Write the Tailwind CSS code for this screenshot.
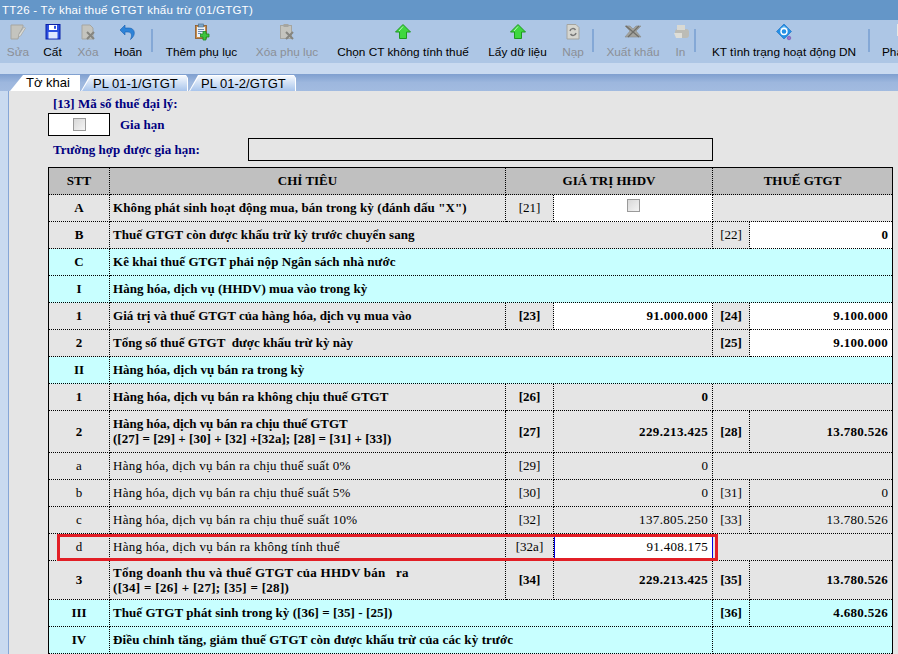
<!doctype html>
<html><head><meta charset="utf-8">
<script src="https://cdn.jsdelivr.net/npm/@tailwindcss/browser@4"></script>
</head>
<body class="relative w-[898px] h-[654px] overflow-hidden bg-[#c9daf0]">
<div class="h-[20px] bg-[#6496c8] text-white text-[11.5px] leading-[21px] pl-[2px] font-['Liberation_Sans',sans-serif] tracking-[0.02em]">TT26 - Tờ khai thuế GTGT khấu trừ (01/GTGT)</div>
<div class="h-[43px] bg-[#adc6e5] flex whitespace-nowrap overflow-hidden font-['Liberation_Sans',sans-serif] text-[11.8px] leading-[14px] text-black [&>*]:shrink-0">
  <div class="w-[36px] flex flex-col items-center text-[#8b8f96]"><svg class="w-[18px] h-[18px] mt-[3px]" viewBox="0 0 18 18"><path d="M2 2h12v2l-4 7-1 5H2z" fill="#c4c4be" stroke="#a5a5a0"/><path d="M15 4l1.500 1-5 8-2 1 .3-2.500z" fill="#dcdcd6" stroke="#a5a5a0" stroke-width=".7"/></svg><span class="mt-[4px]">Sửa</span></div>
  <div class="w-[33px] flex flex-col items-center"><svg class="w-[18px] h-[18px] mt-[3px]" viewBox="0 0 18 18"><rect x="2" y="1.500" width="14" height="14.500" fill="#2b4fe0" stroke="#0a20a8"/><rect x="5" y="2" width="8" height="5" fill="#fff"/><rect x="10" y="2.800" width="2" height="3" fill="#2b4fe0"/><rect x="4.500" y="9" width="9" height="6.500" fill="#dfe8ff"/></svg><span class="mt-[4px]">Cất</span></div>
  <div class="w-[38px] flex flex-col items-center text-[#8b8f96]"><svg class="w-[18px] h-[18px] mt-[3px]" viewBox="0 0 18 18"><path d="M3 2h8l3 3v11H3z" fill="#c4c4be" stroke="#a5a5a0"/><path d="M8 9l7 7M15 9l-7 7" stroke="#85857f" stroke-width="2"/></svg><span class="mt-[4px]">Xóa</span></div>
  <div class="w-[42px] flex flex-col items-center"><svg class="w-[18px] h-[18px] mt-[3px]" viewBox="0 0 18 18"><path d="M6 5h4c6 0 7.500 7 1.500 11.500 2-4.500 1-7.500-2.500-7.500H6v3L1 7 6 2z" fill="#2d83d8" stroke="#1a5fb0" stroke-width=".6"/></svg><span class="mt-[4px]">Hoãn</span></div>
  <div class="w-[2px] h-[23px] mt-[9px] ml-[2px] mr-[5px] bg-[#84a8d6]"></div>
  <div class="w-[87px] flex flex-col items-center"><svg class="w-[18px] h-[18px] mt-[3px]" viewBox="0 0 18 18"><rect x="2.500" y="2.500" width="11" height="13" fill="#c98c4a" stroke="#8a5a2a" stroke-width=".8"/><rect x="4" y="4" width="8" height="10" fill="#eaf2fa"/><rect x="5.500" y="1" width="5" height="3" fill="#7fa7c9" stroke="#446a8a" stroke-width=".6"/><path d="M5 6.500h6M5 8.500h5M5 10.500h3" stroke="#6d8ab0"/><path d="M10 8.500h3v2.500h3v3h-3V17h-3v-3H7.500v-3H10z" fill="#3fc43f" stroke="#1d8a1d" stroke-width=".8"/></svg><span class="mt-[4px]">Thêm phụ lục</span></div>
  <div class="w-[84px] flex flex-col items-center text-[#8b8f96]"><svg class="w-[18px] h-[18px] mt-[3px]" viewBox="0 0 18 18"><rect x="2.500" y="2.500" width="11" height="13" fill="#c4c4be" stroke="#a5a5a0"/><rect x="5.500" y="1" width="5" height="3" fill="#a5a5a0"/><path d="M8 9l7 7M15 9l-7 7" stroke="#85857f" stroke-width="2"/></svg><span class="mt-[4px]">Xóa phụ lục</span></div>
  <div class="w-[148px] flex flex-col items-center"><svg class="w-[18px] h-[18px] mt-[3px]" viewBox="0 0 18 18"><path d="M9 1.500L16.500 9H12.500v6.500h-7V9H1.500z" fill="#3fd83f" stroke="#1f9a1f"/><path d="M9 3.500L5 8" stroke="#b5f5b5"/></svg><span class="mt-[4px]">Chọn CT không tính thuế</span></div>
  <div class="w-[81px] flex flex-col items-center"><svg class="w-[18px] h-[18px] mt-[3px]" viewBox="0 0 18 18"><path d="M9 1.500L16.500 9H12.500v6.500h-7V9H1.500z" fill="#3fd83f" stroke="#1f9a1f"/><path d="M9 3.500L5 8" stroke="#b5f5b5"/></svg><span class="mt-[4px]">Lấy dữ liệu</span></div>
  <div class="w-[30px] flex flex-col items-center text-[#8b8f96]"><svg class="w-[18px] h-[18px] mt-[3px]" viewBox="0 0 18 18"><path d="M3 1.500h9l3 3V16H3z" fill="#d6d6d0" stroke="#a5a5a0"/><path d="M6 8a3 3 0 0 1 5.500-1M12 10a3 3 0 0 1-5.500 1" fill="none" stroke="#777" stroke-width="1.500"/></svg><span class="mt-[4px]">Nạp</span></div>
  <div class="w-[2px] h-[23px] mt-[9px] ml-[4px] mr-[4px] bg-[#84a8d6]"></div>
  <div class="w-[70px] flex flex-col items-center text-[#8b8f96]"><svg class="w-[18px] h-[18px] mt-[3px]" viewBox="0 0 18 18"><path d="M1 3h5l3 3 3-3h5l-5 5 5 6H1l5-6z" fill="#a3a39e" stroke="#8c8c86" stroke-width=".6"/><path d="M2 3l13 11M15 3L4 14" stroke="#6f6f6a" stroke-width="1.300"/></svg><span class="mt-[4px]">Xuất khẩu</span></div>
  <div class="w-[25px] flex flex-col items-center text-[#8b8f96]"><svg class="w-[18px] h-[18px] mt-[3px]" viewBox="0 0 18 18"><path d="M3 9a3 3 0 0 1 3-3h8a3 3 0 0 1 3 3v3a3 3 0 0 1-3 3H7a4 4 0 0 1-4-4z" fill="#bcbcb6"/><path d="M5 2h8v5H5z" fill="#d9d9d3"/><path d="M2 10h8v5H4z" fill="#deded8"/></svg><span class="mt-[4px]">In</span></div>
  <div class="w-[2px] h-[23px] mt-[9px] ml-[1px] mr-[5px] bg-[#84a8d6]"></div>
  <div class="w-[166px] flex flex-col items-center"><svg class="w-[18px] h-[18px] mt-[3px]" viewBox="0 0 18 18"><path d="M9 1l7.500 7.500L9 16 1.500 8.500z" fill="#2590e6" stroke="#1a6cc0" stroke-width=".6"/><path d="M9 3l4 3H5z" fill="#8fd0f8"/><circle cx="9" cy="8.500" r="3" fill="none" stroke="#fff" stroke-width="1.400"/><circle cx="14" cy="15" r="1.800" fill="#9a70d0" stroke="#6a45a0" stroke-width=".5"/></svg><span class="mt-[4px]">KT tình trạng hoạt động DN</span></div>
  <div class="w-[2px] h-[23px] mt-[9px] ml-[1px] mr-[4px] bg-[#84a8d6]"></div>
  <div class="flex flex-col items-start pl-[8px]"><div class="h-[25px] pt-[4px] pl-[15px]"><div class="w-[4px] h-[12px] bg-[#e8e8e4]"></div></div><span>Phát hành</span></div>
</div>
<div class="h-[11px]"></div>
<div class="h-[17px] pl-[8px] bg-linear-to-b from-[#7f9fcf] via-[#9db7de] to-[#a2bbe0] flex items-end font-['Liberation_Sans',sans-serif] text-[13px] leading-[16px] text-black whitespace-nowrap">
  <div class="w-[70px] h-[16px] ml-[2px] pl-[16px] bg-white [clip-path:polygon(13px_0,100%_0,100%_100%,0_100%)]">Tờ khai</div>
  <div class="w-[107px] h-[16px] ml-[1px] p-px pb-0 bg-white [clip-path:polygon(9px_0,calc(100%-2px)_0,100%_3px,100%_100%,0_100%)]"><div class="h-full pl-[11px] bg-linear-to-b from-[#f4f8fd] to-[#a9c5ec] [clip-path:polygon(9px_0,100%_0,100%_100%,0_100%)] leading-[15px]">PL 01-1/GTGT</div></div>
  <div class="w-[107px] h-[16px] ml-[1px] p-px pb-0 bg-white [clip-path:polygon(9px_0,calc(100%-2px)_0,100%_3px,100%_100%,0_100%)]"><div class="h-full pl-[11px] bg-linear-to-b from-[#f4f8fd] to-[#a9c5ec] [clip-path:polygon(9px_0,100%_0,100%_100%,0_100%)] leading-[15px]">PL 01-2/GTGT</div></div>
</div>
<div class="ml-[8px] h-[563px] border-l border-[#86a6d6] bg-[#e5e5e5] overflow-hidden font-['Liberation_Serif',serif] text-[13px] leading-[15px] text-black">
  <div class="pl-[44px] pt-[5px] h-[22px] font-bold text-[#000080]">[13] Mã số thuế đại lý:</div>
  <div class="flex items-center h-[23px] ml-[39px]">
    <div class="w-[62px] h-[23px] border border-black bg-white flex items-center justify-center"><div class="w-[13px] h-[13px] border border-[#9a9a9a] bg-linear-to-br from-[#d8d8d8] to-[#f4f4f4]"></div></div>
    <div class="ml-[10px] font-bold text-[#000080]">Gia hạn</div>
  </div>
  <div class="flex items-center h-[23px] mt-[2px] ml-[44px]">
    <div class="w-[195px] font-bold text-[#000080]">Trường hợp được gia hạn:</div>
    <div class="w-[465px] h-[23px] border border-black"></div>
  </div>
  <table class="mt-[6px] ml-[39px] w-[845px] table-fixed border-separate border-spacing-0 border-t border-x border-black [&_td]:border-b [&_td]:pb-px [&_td]:border-dotted [&_td]:border-black [&_td]:align-middle [&_td:not(:last-child)]:border-r [&_tr]:h-[27px]">
    <colgroup><col class="w-[61px]"><col class="w-[396px]"><col class="w-[48px]"><col class="w-[159px]"><col class="w-[37px]"><col class="w-[142px]"></colgroup>
    <tbody>
      <tr class="bg-[#c0c0c0] font-bold text-center"><td>STT</td><td>CHỈ TIÊU</td><td colspan="2">GIÁ TRỊ HHDV</td><td colspan="2">THUẾ GTGT</td></tr>
      <tr class="font-bold"><td class="text-center">A</td><td class="pl-[3px] tracking-[.1px]">Không phát sinh hoạt động mua, bán trong kỳ (đánh dấu "X")</td><td class="text-center font-normal">[21]</td><td class="bg-white !align-top"><div class="w-[13px] h-[13px] mx-auto mt-[4px] border border-[#9a9a9a] bg-linear-to-br from-[#d8d8d8] to-[#f4f4f4]"></div></td><td colspan="2"></td></tr>
      <tr class="font-bold"><td class="text-center">B</td><td colspan="3" class="pl-[3px] tracking-[.06px]">Thuế GTGT còn được khấu trừ kỳ trước chuyển sang</td><td class="text-center font-normal">[22]</td><td class="bg-white text-right pr-[4px]">0</td></tr>
      <tr class="font-bold bg-[#c8ffff]"><td class="text-center">C</td><td colspan="5" class="pl-[3px] tracking-[.05px]">Kê khai thuế GTGT phải nộp Ngân sách nhà nước</td></tr>
      <tr class="font-bold bg-[#c8ffff]"><td class="text-center">I</td><td colspan="5" class="pl-[3px] tracking-[.03px]">Hàng hóa, dịch vụ (HHDV) mua vào trong kỳ</td></tr>
      <tr class="font-bold"><td class="text-center">1</td><td class="pl-[3px] tracking-[.04px]">Giá trị và thuế GTGT của hàng hóa, dịch vụ mua vào</td><td class="text-center">[23]</td><td class="bg-white text-right pr-[4px] tracking-[.3px]">91.000.000</td><td class="text-center">[24]</td><td class="bg-white text-right pr-[4px] tracking-[.3px]">9.100.000</td></tr>
      <tr class="font-bold"><td class="text-center">2</td><td colspan="3" class="pl-[3px]">Tổng số thuế GTGT&nbsp; được khấu trừ kỳ này</td><td class="text-center">[25]</td><td class="bg-white text-right pr-[4px] tracking-[.3px]">9.100.000</td></tr>
      <tr class="font-bold bg-[#c8ffff]"><td class="text-center">II</td><td colspan="5" class="pl-[3px]">Hàng hóa, dịch vụ bán ra trong kỳ</td></tr>
      <tr class="font-bold"><td class="text-center">1</td><td class="pl-[3px] tracking-[.02px]">Hàng hóa, dịch vụ bán ra không chịu thuế GTGT</td><td class="text-center">[26]</td><td class="text-right pr-[4px]">0</td><td colspan="2"></td></tr>
      <tr class="font-bold !h-[42px]"><td class="text-center">2</td><td class="pl-[3px]"><span class="tracking-[-.05px]">Hàng hóa, dịch vụ bán ra chịu thuế GTGT</span><br><span class="tracking-[.04px]">([27] = [29] + [30] + [32] +[32a]; [28] = [31] + [33])</span></td><td class="text-center">[27]</td><td class="text-right pr-[4px] tracking-[.36px]">229.213.425</td><td class="text-center">[28]</td><td class="text-right pr-[4px] tracking-[.3px]">13.780.526</td></tr>
      <tr><td class="text-center">a</td><td class="pl-[3px] tracking-[.26px]">Hàng hóa, dịch vụ bán ra chịu thuế suất 0%</td><td class="text-center">[29]</td><td class="text-right pr-[4px]">0</td><td colspan="2"></td></tr>
      <tr><td class="text-center">b</td><td class="pl-[3px] tracking-[.26px]">Hàng hóa, dịch vụ bán ra chịu thuế suất 5%</td><td class="text-center">[30]</td><td class="text-right pr-[4px]">0</td><td class="text-center">[31]</td><td class="text-right pr-[4px]">0</td></tr>
      <tr><td class="text-center">c</td><td class="pl-[3px] tracking-[.26px]">Hàng hóa, dịch vụ bán ra chịu thuế suất 10%</td><td class="text-center">[32]</td><td class="text-right pr-[4px] tracking-[.36px]">137.805.250</td><td class="text-center">[33]</td><td class="text-right pr-[4px] tracking-[.3px]">13.780.526</td></tr>
      <tr><td class="text-center">d</td><td class="pl-[3px] tracking-[.28px]">Hàng hóa, dịch vụ bán ra không tính thuế</td><td class="text-center">[32a]</td><td class="bg-white text-right pr-[4px] tracking-[.3px] !border-x !border-x-[#0000e0] ![border-left-style:solid] ![border-right-style:solid]">91.408.175</td><td colspan="2"></td></tr>
      <tr class="font-bold !h-[39px]"><td class="text-center">3</td><td class="pl-[3px]"><span class="tracking-[.25px]">Tổng doanh thu và thuế GTGT của HHDV bán&nbsp;&nbsp; ra</span><br><span class="tracking-[.3px]">([34] = [26] + [27]; [35] = [28])</span></td><td class="text-center">[34]</td><td class="text-right pr-[4px] tracking-[.36px]">229.213.425</td><td class="text-center">[35]</td><td class="text-right pr-[4px] tracking-[.3px]">13.780.526</td></tr>
      <tr class="font-bold bg-[#c8ffff]"><td class="text-center">III</td><td colspan="3" class="pl-[3px] tracking-[.06px]">Thuế GTGT phát sinh trong kỳ ([36] = [35] - [25])</td><td class="text-center">[36]</td><td class="text-right pr-[4px] tracking-[.3px]">4.680.526</td></tr>
      <tr class="font-bold bg-[#c8ffff]"><td class="text-center">IV</td><td colspan="3" class="pl-[3px] tracking-[.12px]">Điều chỉnh tăng, giảm thuế GTGT còn được khấu trừ của các kỳ trước</td><td colspan="2"></td></tr>
    </tbody>
  </table>
</div>
<div class="absolute left-[57px] top-[534px] w-[661px] h-[27px] border-[3px] border-[#e21f26]"></div>
</body></html>
